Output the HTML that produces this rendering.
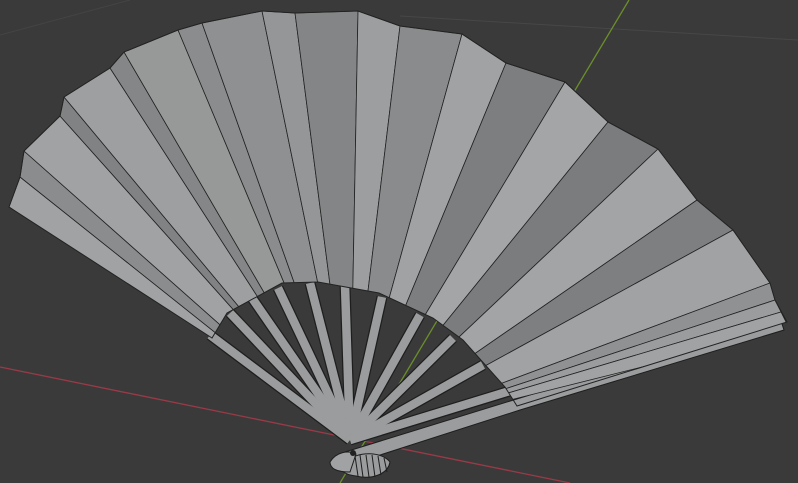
<!DOCTYPE html>
<html><head><meta charset="utf-8"><style>
html,body{margin:0;padding:0;background:#3a3a3a;}
svg{display:block}
</style></head><body>
<svg width="798" height="483" viewBox="0 0 798 483" xmlns="http://www.w3.org/2000/svg">
<rect width="798" height="483" fill="#3a3a3a"/>
<line x1="0" y1="35" x2="130" y2="0" stroke="#444" stroke-width="1"/>
<line x1="400" y1="16" x2="798" y2="40" stroke="#474747" stroke-width="1"/>
<line x1="0" y1="367" x2="570" y2="483" stroke="#9a3a48" stroke-width="1.3"/>
<line x1="629" y1="0" x2="340" y2="483" stroke="#6b8f2a" stroke-width="1.3"/>
<defs>
<clipPath id="paper">
<polygon points="212,338 9,207 20,177 24,151 60,116 64,97 110,68 124,52 178,30 202,23 262,11 295,13 358,11 400,26 462,34 506,63 565,82 608,122 658,149 697,200 733,230 770,283 775,300 787,322 517,406 505,387 463,340 433,318 379,293 318,282 282,283 227,313"/>
</clipPath>
</defs>
<g stroke-linecap="butt">
<g stroke="#1e1e1e" stroke-width="11">
<line x1="350" y1="440" x2="210" y2="335"/>
<line x1="350" y1="440" x2="230" y2="313"/>
<line x1="350" y1="440" x2="252" y2="298"/>
<line x1="350" y1="440" x2="278" y2="288"/>
<line x1="350" y1="440" x2="310" y2="283"/>
<line x1="350" y1="440" x2="345" y2="285"/>
<line x1="350" y1="440" x2="382" y2="297"/>
<line x1="350" y1="440" x2="420" y2="315"/>
<line x1="350" y1="440" x2="453" y2="338"/>
<line x1="350" y1="440" x2="483" y2="365"/>
<line x1="350" y1="440" x2="513" y2="390"/>
</g>
<g stroke="#9a9c9d" stroke-width="8.5">
<line x1="350" y1="440" x2="210" y2="335"/>
<line x1="350" y1="440" x2="230" y2="313"/>
<line x1="350" y1="440" x2="252" y2="298"/>
<line x1="350" y1="440" x2="278" y2="288"/>
<line x1="350" y1="440" x2="310" y2="283"/>
<line x1="350" y1="440" x2="345" y2="285"/>
<line x1="350" y1="440" x2="382" y2="297"/>
<line x1="350" y1="440" x2="420" y2="315"/>
<line x1="350" y1="440" x2="453" y2="338"/>
<line x1="350" y1="440" x2="483" y2="365"/>
<line x1="350" y1="440" x2="513" y2="390"/>
</g>
</g>
<polygon points="345,452 520,398 780,318 784,330 520,410 352,464" fill="#9a9c9d" stroke="#1e1e1e" stroke-width="1"/>
<g clip-path="url(#paper)" stroke="#222" stroke-width="0.8">
<polygon points="350,440 9,207 20,177" fill="#a0a2a3"/>
<polygon points="350,440 20,177 24,151" fill="#8a8c8d"/>
<polygon points="350,440 24,151 60,116" fill="#a0a2a3"/>
<polygon points="350,440 60,116 64,97" fill="#808283"/>
<polygon points="350,440 64,97 110,68" fill="#9d9fa0"/>
<polygon points="350,440 110,68 124,52" fill="#848687"/>
<polygon points="350,440 124,52 178,30" fill="#979999"/>
<polygon points="350,440 178,30 202,23" fill="#8a8c8d"/>
<polygon points="350,440 202,23 262,11" fill="#8e9091"/>
<polygon points="350,440 262,11 295,13" fill="#949697"/>
<polygon points="350,440 295,13 358,11" fill="#838586"/>
<polygon points="350,440 358,11 400,26" fill="#9c9e9f"/>
<polygon points="350,440 400,26 462,34" fill="#898b8c"/>
<polygon points="350,440 462,34 506,63" fill="#a0a2a3"/>
<polygon points="350,440 506,63 565,82" fill="#7c7e7f"/>
<polygon points="350,440 565,82 608,122" fill="#a3a5a6"/>
<polygon points="350,440 608,122 658,149" fill="#7a7c7d"/>
<polygon points="350,440 658,149 697,200" fill="#a2a4a5"/>
<polygon points="350,440 697,200 733,230" fill="#7d7f80"/>
<polygon points="350,440 733,230 770,283" fill="#a0a2a3"/>
<polygon points="350,440 770,283 775,300" fill="#8f9192"/>
<polygon points="350,440 775,300 781,312" fill="#9a9c9d"/>
<polygon points="350,440 781,312 790,330" fill="#a0a2a3"/>
</g>
<polygon points="212,338 9,207 20,177 24,151 60,116 64,97 110,68 124,52 178,30 202,23 262,11 295,13 358,11 400,26 462,34 506,63 565,82 608,122 658,149 697,200 733,230 770,283 775,300 787,322 517,406 505,387 463,340 433,318 379,293 318,282 282,283 227,313" fill="none" stroke="#222" stroke-width="1"/>
<g stroke="#1e1e1e" stroke-width="1">
<path d="M345,462 C360,450 382,452 390,462 C388,474 372,480 356,476 C340,474 338,467 345,462 Z" fill="#9a9c9d"/>
<path d="M330,462 C336,452 348,450 356,454 L350,472 C338,472 330,469 330,462 Z" fill="#a0a2a3"/>
<path d="M355,456 L358,476 M360,455 L363,477 M366,455 L369,477 M372,455 L375,477 M378,456 L381,475 M384,458 L387,472" fill="none"/>
</g>
<circle cx="353" cy="453" r="3" fill="#222"/>
</svg>
</body></html>
